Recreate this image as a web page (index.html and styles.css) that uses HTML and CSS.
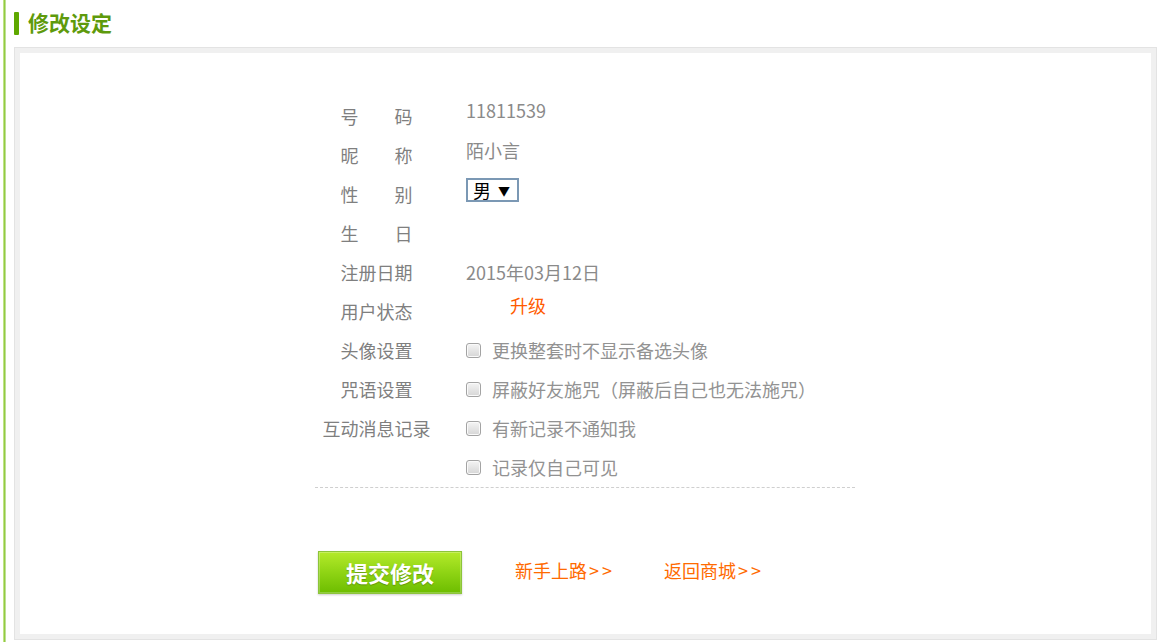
FILE: index.html
```html
<!doctype html>
<html lang="zh-CN">
<head>
<meta charset="UTF-8">
<title>修改设定</title>
<link rel="stylesheet" href="styles.css">
</head>
<body>
<div class="page">
	<div class="title"><i class="mark"></i><h2>修改设定</h2></div>
	<div class="box">
		<div class="inner">
			<div class="form">
				<div class="row"><span class="lab"><b>号码</b></span><span class="val up">11811539</span></div>
				<div class="row"><span class="lab"><b>昵称</b></span><span class="val up2">陌小言</span></div>
				<div class="row"><span class="lab"><b>性别</b></span><span class="val"><span class="sel">男<em>▼</em></span></span></div>
				<div class="row"><span class="lab"><b>生日</b></span><span class="val"></span></div>
				<div class="row"><span class="lab"><b>注册日期</b></span><span class="val">2015年03月12日</span></div>
				<div class="row"><span class="lab"><b>用户状态</b></span><span class="val up"><a class="up-link" href="#">升级</a></span></div>
				<div class="row"><span class="lab"><b>头像设置</b></span><label class="val"><i class="chk"></i>更换整套时不显示备选头像</label></div>
				<div class="row"><span class="lab"><b>咒语设置</b></span><label class="val"><i class="chk"></i>屏蔽好友施咒（屏蔽后自己也无法施咒）</label></div>
				<div class="row"><span class="lab"><b>互动消息记录</b></span><label class="val"><i class="chk"></i>有新记录不通知我</label></div>
				<div class="row"><span class="lab"></span><label class="val"><i class="chk"></i>记录仅自己可见</label></div>
			</div>
			<div class="btns">
				<a class="submit" href="#">提交修改</a>
				<a class="link" href="#">新手上路<span>&gt;&gt;</span></a>
				<a class="link" href="#">返回商城<span>&gt;&gt;</span></a>
			</div>
		</div>
	</div>
</div>
</body>
</html>
```

FILE: styles.css
```css
*{ margin:0; padding:0;}
a{text-decoration:none;}
body{
	font-family:"Microsoft YaHei","Noto Sans CJK SC",sans-serif;
	background:#fff;
}
.page{
	height:642px;
	padding-left:14px;
	background:linear-gradient(to right,#fff 3px,#d9f0b0 3px,#a6d65a 4px,#7fbf2a 5px,#fff 6px) no-repeat;
	overflow:hidden;
}
.title{
	display:flex;
	align-items:center;
	height:47px;
	padding-bottom:6px;
	box-sizing:border-box;
}
.title .mark{
	display:block;
	width:5px;
	height:23px;
	margin-top:5px;
	background:#5fa800;
	border-radius:1px;
}
.title h2{
	margin:3px 0 0 9px;
	font-size:21px;
	line-height:24px;
	color:#5e9a0c;
	font-weight:bold;
}
.box{
	width:1143px;
	height:593px;
	box-sizing:border-box;
	border:1px solid #e3e3e3;
	background:#f0f0f0;
	padding:5px;
}
.inner{
	height:100%;
	background:#fff;
	padding-top:44px;
	box-sizing:border-box;
}
.form{
	width:540px;
	margin-left:295px;
	border-bottom:1px dashed #cfcfcf;
}
.row{
	display:flex;
	height:39px;
	font-size:18px;
	color:#8a8a8a;
}
.lab{
	width:123px;
	text-align:center;
	line-height:39px;
	color:#7f7f7f;
}
.lab b{
	display:inline-block;
	min-width:72px;
	font-weight:normal;
	text-align:justify;
	text-align-last:justify;
}
.val{
	flex:1;
	display:flex;
	align-items:center;
	padding-left:28px;
	line-height:39px;
}
label.val{
	color:#929292;
}
.val.up{
	align-items:flex-start;
	line-height:27px;
}
.val.up2{
	align-items:flex-start;
	line-height:29px;
}
.up-link{
	margin-left:44px;
	color:#ff5a00;
}
.sel{
	display:inline-flex;
	align-items:center;
	width:53px;
	height:24px;
	margin-top:-9px;
	box-sizing:border-box;
	border:2px solid #7b98b4;
	padding-left:5px;
	font-size:18px;
	line-height:19px;
	color:#000;
}
.sel em{
	font-style:normal;
	font-size:12px;
	margin-left:7px;
}
.chk{
	display:block;
	width:15px;
	height:15px;
	margin-right:11px;
	box-sizing:border-box;
	border:1px solid #a3a3a3;
	border-radius:3px;
	background:linear-gradient(#f4f4f4,#d6d6d6);
	box-shadow:inset 0 0 0 1px #fafafa;
}
.btns{
	display:flex;
	align-items:center;
	margin:63px 0 0 298px;
}
.submit{
	display:block;
	width:144px;
	height:43px;
	box-sizing:border-box;
	border:1px solid #8dc43a;
	background:linear-gradient(#b4ea2a,#8fd414 50%,#6dbd00);
	box-shadow:0 1px 2px rgba(0,0,0,.2),inset 0 0 0 1px rgba(255,255,255,.25);
	color:#fff;
	font-size:22px;
	font-weight:bold;
	line-height:41px;
	text-align:center;
	text-shadow:0 1px 1px rgba(0,0,0,.25);
}
.link{
	margin:-5px 0 0 53px;
	color:#ff6a00;
	font-size:18px;
}
.link span{
	margin-left:2px;
	letter-spacing:3px;
}
.link + .link{
	margin-left:49px;
}
```
